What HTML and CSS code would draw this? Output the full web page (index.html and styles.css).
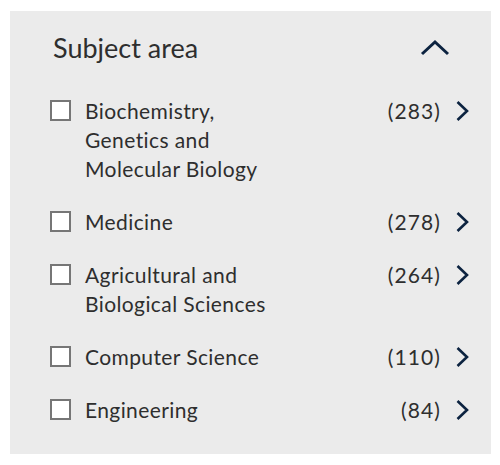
FILE: index.html
```html
<!DOCTYPE html>
<html>
<head>
<meta charset="utf-8">
<link rel="stylesheet" href="styles.css">
</head>
<body>
<section class="panel">
  <header class="panel-head">
    <h2 class="panel-title">Subject area</h2>
    <svg class="collapse" width="30" height="18" viewBox="0 0 30 18"><polyline points="2,15 15,3 28,15" fill="none" stroke="#0c2340" stroke-width="3"/></svg>
  </header>
  <ul class="facets">
    <li class="facet">
      <span class="box"></span>
      <span class="label">Biochemistry,<br>Genetics and<br>Molecular Biology</span>
      <span class="count">(283)</span>
      <svg class="chev" width="13" height="22" viewBox="0 0 13 22"><polyline points="1.5,2 11,11 1.5,20" fill="none" stroke="#0c2340" stroke-width="2.6"/></svg>
    </li>
    <li class="facet">
      <span class="box"></span>
      <span class="label">Medicine</span>
      <span class="count">(278)</span>
      <svg class="chev" width="13" height="22" viewBox="0 0 13 22"><polyline points="1.5,2 11,11 1.5,20" fill="none" stroke="#0c2340" stroke-width="2.6"/></svg>
    </li>
    <li class="facet">
      <span class="box"></span>
      <span class="label">Agricultural and<br>Biological Sciences</span>
      <span class="count">(264)</span>
      <svg class="chev" width="13" height="22" viewBox="0 0 13 22"><polyline points="1.5,2 11,11 1.5,20" fill="none" stroke="#0c2340" stroke-width="2.6"/></svg>
    </li>
    <li class="facet">
      <span class="box"></span>
      <span class="label">Computer Science</span>
      <span class="count">(110)</span>
      <svg class="chev" width="13" height="22" viewBox="0 0 13 22"><polyline points="1.5,2 11,11 1.5,20" fill="none" stroke="#0c2340" stroke-width="2.6"/></svg>
    </li>
    <li class="facet">
      <span class="box"></span>
      <span class="label">Engineering</span>
      <span class="count">(84)</span>
      <svg class="chev" width="13" height="22" viewBox="0 0 13 22"><polyline points="1.5,2 11,11 1.5,20" fill="none" stroke="#0c2340" stroke-width="2.6"/></svg>
    </li>
  </ul>
</section>
</body>
</html>
```
FILE: styles.css
```css
html, body {
  margin: 0;
  padding: 0;
  background: #ffffff;
}
body {
  font-family: Lato, "Liberation Sans", sans-serif;
  color: #2e2e2e;
}
.panel {
  box-sizing: border-box;
  margin: 11px 0 0 10px;
  width: 481px;
  height: 443px;
  background: #ebebeb;
  padding: 19px 22px 0 40px;
}
.panel-head {
  display: flex;
  align-items: center;
  justify-content: space-between;
  height: 36px;
  padding-left: 3px;
}
.panel-title {
  margin: 0;
  font-size: 27px;
  font-weight: 400;
  line-height: 36px;
}
.collapse {
  display: block;
  margin-right: 19px;
}
.facets {
  list-style: none;
  margin: 0;
  padding: 0;
  margin-top: 30px;
  display: flex;
  flex-direction: column;
  gap: 24px;
}
.facet {
  display: flex;
  align-items: flex-start;
  font-size: 21px;
  letter-spacing: 0.4px;
  line-height: 29px;
}
.box {
  box-sizing: border-box;
  flex: none;
  width: 21px;
  height: 21px;
  margin-top: 4px;
  border: 2px solid #767676;
  background: #ffffff;
}
.label {
  flex: 1;
  margin-left: 14px;
}
.count {
  flex: none;
  letter-spacing: 1.1px;
}
.chev {
  display: block;
  flex: none;
  margin-left: 15px;
  margin-top: 4px;
}
```
